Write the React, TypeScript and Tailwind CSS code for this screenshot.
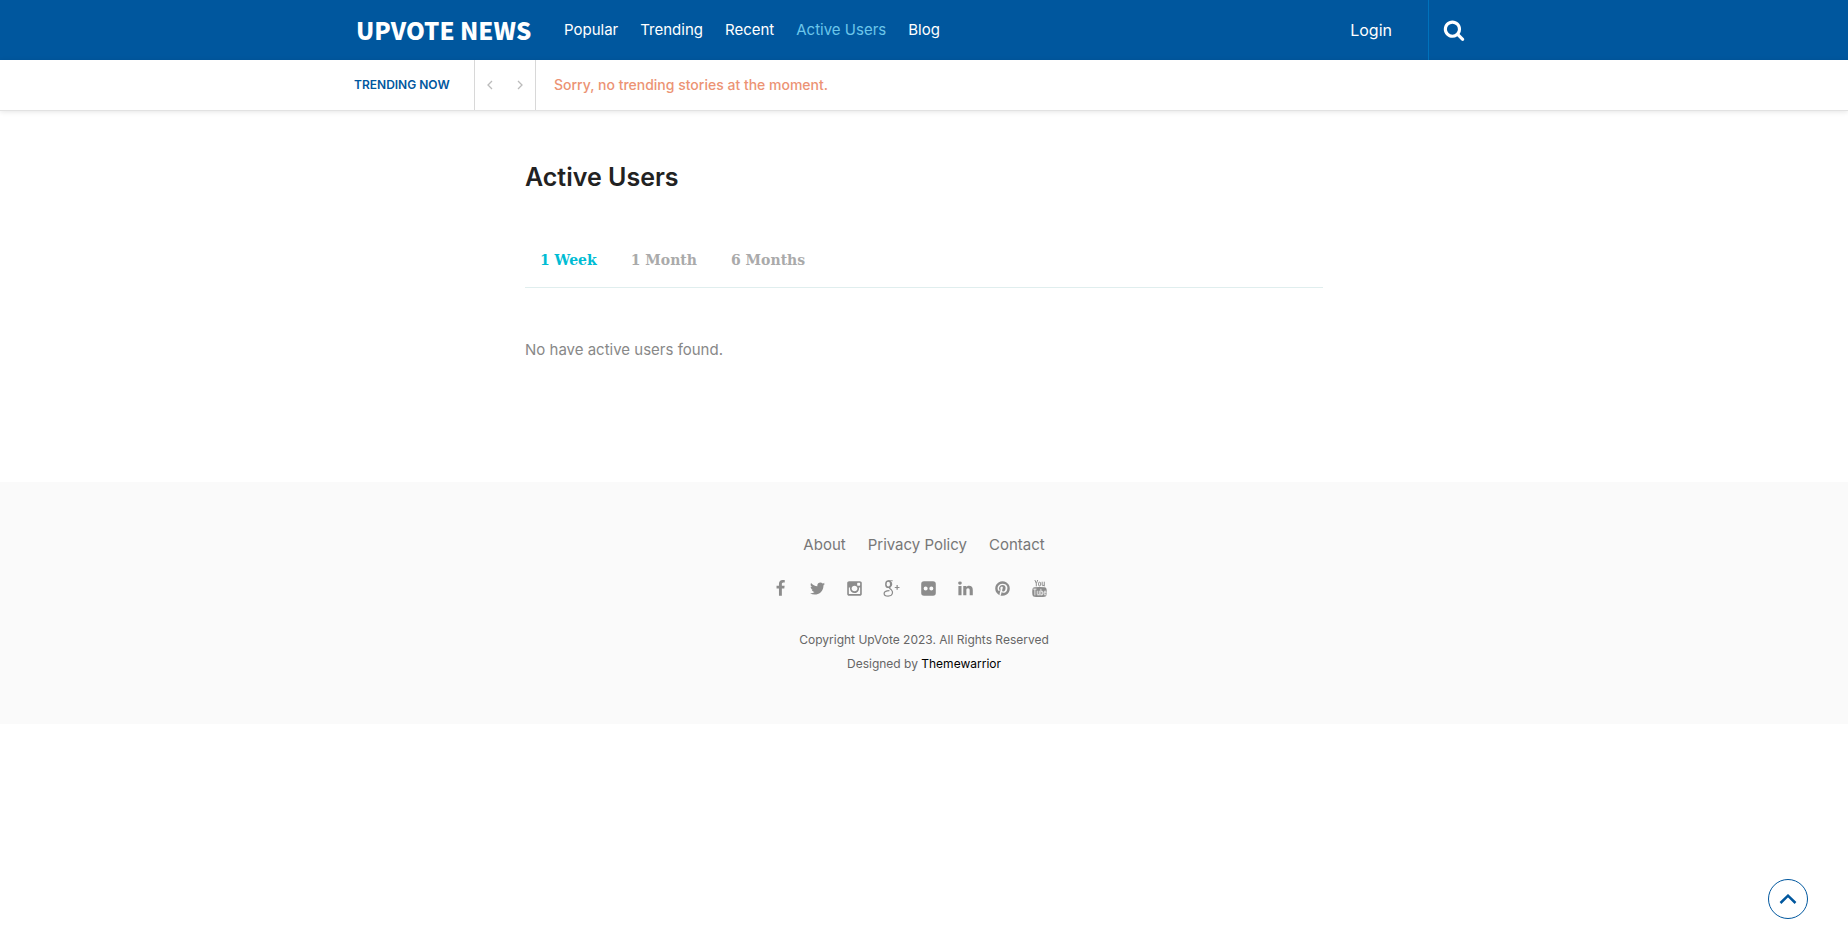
import React from "react";

const navLinks = ["Popular", "Trending", "Recent", "Active Users", "Blog"];
const periods = ["1 Week", "1 Month", "6 Months"];
const footerLinks = ["About", "Privacy Policy", "Contact"];

type GlyphProps = { className?: string; children: React.ReactNode };

function Glyph({ className = "size-[17px]", children }: GlyphProps) {
  return (
    <svg viewBox="0 0 1792 1792" className={className} fill="currentColor" aria-hidden="true">
      {children}
    </svg>
  );
}

const socials: { name: string; icon: React.ReactNode }[] = [
  {
    name: "Facebook",
    icon: (
      <path d="M1343 12v264h-157q-86 0-116 36t-30 108v189h293l-39 296h-254v759h-306v-759h-255v-296h255v-218q0-186 104-288.5t277-102.5q147 0 228 12z" />
    ),
  },
  {
    name: "Twitter",
    icon: (
      <path d="M1684 408q-67 98-162 167 1 14 1 42 0 130-38 259.5t-115.5 248.5-184.5 210.5-258 146-323 54.5q-271 0-496-145 35 4 78 4 225 0 401-138-105-2-188-64.5t-114-159.5q33 5 61 5 43 0 85-11-112-23-185.5-111.5t-73.5-205.5v-4q68 38 146 41-66-44-105-115t-39-154q0-88 44-163 121 149 294.5 238.5t371.5 99.5q-8-38-8-74 0-134 94.5-228.5t228.5-94.5q140 0 236 102 109-21 205-78-37 115-142 178 93-10 186-50z" />
    ),
  },
  {
    name: "Instagram",
    icon: (
      <path d="M1490 1426v-648h-135q20 63 20 131 0 126-64 232.5t-174 168.5-240 62q-197 0-337-135.5t-140-327.5q0-68 20-131h-141v648q0 26 17.5 43.5t43.5 17.5h1069q25 0 43-17.5t18-43.5zm-284-533q0-124-90.5-211.5t-218.5-87.5q-127 0-217.5 87.5t-90.5 211.5 90.5 211.5 217.5 87.5q128 0 218.5-87.5t90.5-211.5zm284-360v-165q0-28-20-48.5t-49-20.5h-174q-29 0-49 20.5t-20 48.5v165q0 29 20 49t49 20h174q29 0 49-20t20-49zm174-208v1142q0 81-58 139t-139 58h-1142q-81 0-139-58t-58-139v-1142q0-81 58-139t139-58h1142q81 0 139 58t58 139z" />
    ),
  },
  {
    name: "Google Plus",
    icon: (
      <g fill="none" stroke="currentColor" strokeWidth="130">
        <ellipse cx="560" cy="440" rx="260" ry="330" strokeWidth="160" />
        <path d="M520 80h500" strokeWidth="100" />
        <path d="M760 160q190 140 150 340-20 100-170 210-110 90-30 180 50 60 170 150 150 130 120 330-60 320-460 320-420 0-420-280 0-270 560-300" />
        <path d="M1240 790h500M1490 540v500" />
      </g>
    ),
  },
  {
    name: "Flickr",
    icon: (
      <path
        fillRule="evenodd"
        d="M416 128h960a288 288 0 0 1 288 288v960a288 288 0 0 1-288 288h-960a288 288 0 0 1-288-288v-960a288 288 0 0 1 288-288zm180 556a212 212 0 1 0 0 424 212 212 0 0 0 0-424zm600 0a212 212 0 1 0 0 424 212 212 0 0 0 0-424z"
      />
    ),
  },
  {
    name: "LinkedIn",
    icon: (
      <path d="M477 625v991h-330v-991h330zm21-306q1 73-50.5 122t-135.5 49h-2q-82 0-132-49t-50-122q0-74 51.5-122.5t134.5-48.5 133 48.5 51 122.5zm1166 729v568h-329v-530q0-105-40.5-164.5t-126.5-59.5q-63 0-105.5 34.5t-63.5 85.5q-11 30-11 81v553h-329q2-399 2-647t-1-296l-1-48h329v144h-2q20-32 41-56t56.5-52 87-43.5 114.5-15.5q171 0 275 113.5t104 332.5z" />
    ),
  },
  {
    name: "Pinterest",
    icon: (
      <path d="M1664 896q0 209-103 385.5t-279.5 279.5-385.5 103q-111 0-218-32 59-93 78-164 9-34 54-211 20 39 73 67.5t114 28.5q121 0 216-68.5t147-188.5 52-270q0-114-59.5-214t-172.5-163-255-63q-105 0-196 29t-154.5 77-109 110.5-67 129.5-21.5 134q0 104 40 183t117 111q30 12 38-20 2-7 8-31t8-30q6-23-11-43-51-61-51-151 0-151 104.5-259.5t273.5-108.5q151 0 235.5 82t84.5 213q0 170-68.5 289t-175.5 119q-61 0-98-43.5t-23-104.5q8-35 26.5-93.5t30-103 11.5-75.5q0-50-27-83t-77-33q-62 0-105 57t-43 142q0 73 25 122l-99 418q-17 70-13 177-206-91-333-281t-127-423q0-209 103-385.5t279.5-279.5 385.5-103 385.5 103 279.5 279.5 103 385.5z" />
    ),
  },
  {
    name: "YouTube",
    icon: (
      <g>
        <path d="M360 770q536-50 1072 0 190 20 210 210 40 300 0 580-20 190-210 210-536 50-1072 0-190-20-210-210-40-280 0-580 20-190 210-210z" />
        <g fill="none" stroke="#fafafa" strokeWidth="85">
          <path d="M240 960h340M410 960v660M660 1130v400q40 140 200-20M870 1130v490M1040 930v690M1040 1200q190-90 190 60v220q0 160-190 60M1380 1350h210v-80q-20-110-105-110-105 10-105 110v200q20 120 105 120 100-10 105-140" />
        </g>
        <g fill="none" stroke="currentColor" strokeWidth="100">
          <path d="M410 0l150 370v300M710 0l-150 370M1180 180v380q40 120 210-30M1400 180v490" />
          <rect x="800" y="230" width="210" height="390" rx="95" />
        </g>
      </g>
    ),
  },
];

export default function App() {
  return (
    <div className="bg-white font-[Inter,sans-serif] text-[#888888]">
      <header className="bg-[#00579e] text-white">
        <div className="mx-auto flex h-[60px] max-w-[1140px] items-center">
          <a
            href="#home"
            className="w-[210px] pl-[2px] font-['Noto_Sans_CJK_SC',sans-serif] text-[24px] leading-[58px] font-black whitespace-nowrap"
          >
            UPVOTE NEWS
          </a>
          <nav className="flex gap-[22px] text-[15px] leading-[60px] whitespace-nowrap" aria-label="Main">
            {navLinks.map((label) => (
              <a key={label} href="#nav" className={label === "Active Users" ? "text-[#6bc6ea]" : ""}>
                {label}
              </a>
            ))}
          </nav>
          <div className="ml-auto flex h-full items-center">
            <a href="#login" className="pr-9 text-base">
              Login
            </a>
            <button
              type="button"
              aria-label="Search"
              className="flex h-full w-[66px] items-center border-l border-[#0072bc] pl-3.5"
            >
              <Glyph className="size-[22px]">
                <path d="M1216 832q0-185-131.5-316.5t-316.5-131.5-316.5 131.5-131.5 316.5 131.5 316.5 316.5 131.5 316.5-131.5 131.5-316.5zm512 832q0 52-38 90t-90 38q-54 0-90-38l-343-342q-179 124-399 124-143 0-273.5-55.5t-225-150-150-225-55.5-273.5 55.5-273.5 150-225 225-150 273.5-55.5 273.5 55.5 225 150 150 225 55.5 273.5q0 220-124 399l343 343q37 37 37 90z" />
              </Glyph>
            </button>
          </div>
        </div>
      </header>

      <section className="border-b border-[#e2e2e2] shadow-[0_1px_5px_rgba(0,0,0,0.1)]" aria-label="Trending now">
        <div className="mx-auto flex h-[50px] max-w-[1140px] items-center">
          <h2 className="w-[120px] text-[12px] leading-[50px] font-semibold whitespace-nowrap text-[#00579e]">
            TRENDING NOW
          </h2>
          <div className="flex h-full w-[62px] items-center justify-between border-x border-[#d8d8d8] px-3 text-[#bbbbbb]">
            <button type="button" aria-label="Previous story">
              <svg viewBox="0 0 6 10" className="h-[10px] w-[6px]" fill="none" stroke="currentColor" strokeWidth="1.3">
                <path d="M5 1L1 5l4 4" />
              </svg>
            </button>
            <button type="button" aria-label="Next story">
              <svg viewBox="0 0 6 10" className="h-[10px] w-[6px]" fill="none" stroke="currentColor" strokeWidth="1.3">
                <path d="M1 1l4 4-4 4" />
              </svg>
            </button>
          </div>
          <p className="pl-[18px] text-[14px] leading-[50px] font-medium text-[#ec9374]">
            Sorry, no trending stories at the moment.
          </p>
        </div>
      </section>

      <main className="mx-auto max-w-[798px] pt-[46px] pb-[120px]">
        <h1 className="text-[25px] leading-10 font-semibold text-[#222222]">Active Users</h1>
        <div
          role="tablist"
          className="mt-[49px] flex h-[42px] gap-[34px] border-b border-[#e0eeee] px-[15px] font-['DejaVu_Serif',serif] text-[14px] leading-7 font-bold"
        >
          {periods.map((label, i) => (
            <button
              key={label}
              type="button"
              role="tab"
              aria-selected={i === 0}
              className={i === 0 ? "h-7 text-[#00bcd4]" : "h-7 text-[#aaaaaa]"}
            >
              {label}
            </button>
          ))}
        </div>
        <p className="mt-[50px] text-[15px] leading-6">No have active users found.</p>
      </main>

      <footer className="flex flex-col items-center bg-[#fafafa] pt-[51px] pb-[48px]">
        <nav className="flex gap-[22px] text-[15px] leading-6 text-[#777777]" aria-label="Footer">
          {footerLinks.map((label) => (
            <a key={label} href="#footer">
              {label}
            </a>
          ))}
        </nav>
        <ul className="mt-[23px] flex h-[18px] gap-5 pr-7 text-[#8c8c8c]">
          {socials.map(({ name, icon }) => (
            <li key={name}>
              <a href="#social" aria-label={name}>
                <Glyph>{icon}</Glyph>
              </a>
            </li>
          ))}
        </ul>
        <p className="mt-[30px] text-center text-[12px] leading-6 text-[#666666]">
          Copyright UpVote 2023. All Rights Reserved
          <br />
          Designed by{" "}
          <a href="#themewarrior" className="text-black">
            Themewarrior
          </a>
        </p>
      </footer>

      <button
        type="button"
        aria-label="Back to top"
        className="fixed right-10 bottom-5 flex size-10 items-center justify-center rounded-full border border-[#00579e] bg-white text-[#00579e]"
      >
        <svg viewBox="0 0 18 10" className="h-[10px] w-[18px]" fill="none" stroke="currentColor" strokeWidth="2.5">
          <path d="M1.5 9L9 1.7 16.5 9" />
        </svg>
      </button>
    </div>
  );
}
